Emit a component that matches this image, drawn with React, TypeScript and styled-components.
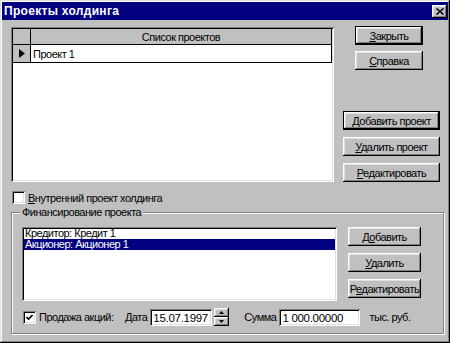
import React from 'react';
import styled, { createGlobalStyle, css } from 'styled-components';

const Global = createGlobalStyle`
  html, body { margin: 0; padding: 0; background: #c0c0c0; }
  body { font-family: "Liberation Sans", Arial, sans-serif; font-size: 11px; letter-spacing: -0.5px; color: #000; }
  * { box-sizing: border-box; }
`;

const raised = css`
  box-shadow: inset -1px -1px #000, inset 1px 1px #fff, inset -2px -2px #808080, inset 2px 2px #dfdfdf;
`;
const sunken = css`
  box-shadow: inset 1px 1px #808080, inset -1px -1px #fff, inset 2px 2px #000, inset -2px -2px #dfdfdf;
`;

const Window = styled.div`
  width: 450px;
  height: 343px;
  background: #c0c0c0;
  padding: 2px;
  box-shadow: inset -1px -1px #000, inset 1px 1px #dfdfdf, inset -2px -2px #808080, inset 2px 2px #fff;
  display: flex;
  flex-direction: column;
`;

const TitleBar = styled.div`
  height: 18px;
  background: #000080;
  color: #fff;
  display: flex;
  align-items: center;
  justify-content: space-between;
  padding: 0 1px 0 2px;
  font-weight: bold;
  font-size: 12px;
  letter-spacing: 0.3px;
`;

const CloseBtn = styled.div`
  width: 15px;
  height: 13px;
  background: #c0c0c0;
  ${raised};
  display: flex;
  align-items: center;
  justify-content: center;
`;

const Body = styled.div`
  padding: 6px 0 0 9px;
  display: flex;
  flex-direction: column;
`;

const TopRow = styled.div`
  display: flex;
  height: 156px;
`;

const Grid = styled.div`
  width: 323px;
  height: 155px;
  margin-top: 1px;
  background: #fff;
  padding: 2px;
  ${sunken};
  display: flex;
  flex-direction: column;
`;

const GridHeader = styled.div`
  display: flex;
  height: 16px;
  background: #c0c0c0;
  border-bottom: 1px solid #000;
`;

const GridRow = styled.div`
  display: flex;
  height: 18px;
  border-bottom: 1px solid #000;
`;

const IndCell = styled.div`
  width: 18px;
  flex: none;
  border-right: 1px solid #000;
  background: #c0c0c0;
  display: flex;
  align-items: center;
  justify-content: center;
`;

const Cell = styled.div<{ $center?: boolean }>`
  flex: 1;
  display: flex;
  align-items: center;
  justify-content: ${(p) => (p.$center ? 'center' : 'flex-start')};
  padding-left: ${(p) => (p.$center ? '0' : '2px')};
  border-right: 1px solid #000;
  white-space: nowrap;
`;

const SideCol = styled.div`
  margin-left: 9px;
  width: 97px;
  display: flex;
  flex-direction: column;
`;

const BtnGroup = styled.div<{ $bottom?: boolean; $gap: number }>`
  display: flex;
  flex-direction: column;
  gap: ${(p) => p.$gap}px;
  margin-top: ${(p) => (p.$bottom ? 'auto' : '0')};
`;

const Btn = styled.div<{ $w: number; $ml?: number; $default?: boolean }>`
  width: ${(p) => p.$w}px;
  height: 19px;
  margin-left: ${(p) => p.$ml ?? 0}px;
  background: #c0c0c0;
  display: flex;
  align-items: center;
  justify-content: center;
  white-space: nowrap;
  ${(p) =>
    p.$default
      ? css`
          box-shadow: inset 0 0 0 1px #000, inset -2px -2px #000, inset 2px 2px #fff, inset -3px -3px #808080,
            inset 3px 3px #dfdfdf;
        `
      : raised};
`;

const U = styled.span`
  text-decoration: underline;
`;

const CheckRow = styled.div`
  margin-top: 9px;
  height: 13px;
  display: flex;
  align-items: center;
  padding-left: 1px;
`;

const Check = styled.div`
  width: 13px;
  height: 13px;
  flex: none;
  background: #fff;
  ${sunken};
  display: flex;
  align-items: center;
  justify-content: center;
`;

const CheckLabel = styled.span<{ $ml: number }>`
  margin-left: ${(p) => p.$ml}px;
  white-space: nowrap;
`;

const GroupBox = styled.div`
  position: relative;
  margin-top: 8px;
  width: 433px;
  height: 122px;
  border: 1px solid #808080;
  box-shadow: inset 1px 1px #fff, 1px 1px #fff;
  padding: 14px 0 0 10px;
`;

const GroupLabel = styled.span`
  position: absolute;
  top: -7px;
  left: 8px;
  padding: 0 2px;
  background: #c0c0c0;
  line-height: 13px;
  white-space: nowrap;
`;

const GroupRow = styled.div`
  display: flex;
`;

const ListBox = styled.div`
  width: 315px;
  height: 74px;
  background: #fff;
  padding: 1px 2px 2px 2px;
  ${sunken};
`;

const ListItem = styled.div<{ $sel?: boolean }>`
  height: 11px;
  line-height: 11px;
  padding-left: 1px;
  white-space: nowrap;
  background: ${(p) => (p.$sel ? '#000080' : 'transparent')};
  color: ${(p) => (p.$sel ? '#fff' : '#000')};
`;

const GroupBtns = styled.div`
  margin-left: 11px;
  display: flex;
  flex-direction: column;
  gap: 7px;
`;

const BottomRow = styled.div`
  margin-top: 7px;
  height: 18px;
  display: flex;
  align-items: center;
  padding-left: 1px;
`;

const Label = styled.span<{ $ml: number; $w?: number }>`
  margin-left: ${(p) => p.$ml}px;
  width: ${(p) => (p.$w ? `${p.$w}px` : 'auto')};
  white-space: nowrap;
`;

const Field = styled.div<{ $w: number; $ml: number }>`
  width: ${(p) => p.$w}px;
  height: 17px;
  margin-left: ${(p) => p.$ml}px;
  background: #fff;
  ${sunken};
  display: flex;
  align-items: center;
  padding: 1px 0 0 3px;
  white-space: nowrap;
  font-size: 11.5px;
  letter-spacing: -0.3px;
`;

const Spinner = styled.div`
  width: 15px;
  height: 18px;
  margin-left: 2px;
  display: flex;
  flex-direction: column;
`;

const SpinPart = styled.div`
  flex: 1;
  background: #c0c0c0;
  ${raised};
  display: flex;
  align-items: center;
  justify-content: center;
`;

const Tri = ({ up }: { up?: boolean }) => (
  <svg width="5" height="3" viewBox="0 0 5 3">
    <polygon points={up ? '2.5,0 5,3 0,3' : '0,0 5,0 2.5,3'} fill="#000" />
  </svg>
);

const CheckMark = () => (
  <svg width="7" height="7" viewBox="0 0 7 7">
    <path d="M0.5 3 L2.5 5 L6.5 1" stroke="#000" strokeWidth="1.6" fill="none" />
  </svg>
);

export default function App() {
  return (
    <>
      <Global />
      <Window>
        <TitleBar>
          <span>Проекты холдинга</span>
          <CloseBtn>
            <svg width="8" height="7" viewBox="0 0 8 7">
              <path d="M0.5 0.5 L7.5 6.5 M7.5 0.5 L0.5 6.5" stroke="#000" strokeWidth="1.5" />
            </svg>
          </CloseBtn>
        </TitleBar>
        <Body>
          <TopRow>
            <Grid>
              <GridHeader>
                <IndCell />
                <Cell $center>Список проектов</Cell>
              </GridHeader>
              <GridRow>
                <IndCell>
                  <svg width="6" height="9" viewBox="0 0 6 9">
                    <polygon points="0,0 6,4.5 0,9" fill="#000" />
                  </svg>
                </IndCell>
                <Cell>Проект 1</Cell>
              </GridRow>
            </Grid>
            <SideCol>
              <BtnGroup $gap={6}>
                <Btn $w={68} $ml={12} $default>
                  <span><U>З</U>акрыть</span>
                </Btn>
                <Btn $w={68} $ml={12}>
                  <span><U>С</U>правка</span>
                </Btn>
              </BtnGroup>
              <BtnGroup $gap={7} $bottom>
                <Btn $w={97} $default>
                  <span><U>Д</U>обавить проект</span>
                </Btn>
                <Btn $w={97}>
                  <span><U>У</U>далить проект</span>
                </Btn>
                <Btn $w={97}>
                  <span><U>Р</U>едактировать</span>
                </Btn>
              </BtnGroup>
            </SideCol>
          </TopRow>
          <CheckRow>
            <Check />
            <CheckLabel $ml={3}>
              <U>В</U>нутренний проект холдинга
            </CheckLabel>
          </CheckRow>
          <GroupBox>
            <GroupLabel>Финансирование проекта</GroupLabel>
            <GroupRow>
              <ListBox>
                <ListItem>Кредитор: Кредит 1</ListItem>
                <ListItem $sel>Акционер: Акционер 1</ListItem>
              </ListBox>
              <GroupBtns>
                <Btn $w={73}>
                  <span>Д<U>о</U>бавить</span>
                </Btn>
                <Btn $w={73}>
                  <span><U>У</U>далить</span>
                </Btn>
                <Btn $w={73}>
                  <span>Р<U>е</U>дактировать</span>
                </Btn>
              </GroupBtns>
            </GroupRow>
            <BottomRow>
              <Check>
                <CheckMark />
              </Check>
              <Label $ml={3} $w={86}>Продажа акций:</Label>
              <Label $ml={0}>Дата</Label>
              <Field $w={62} $ml={3}>15.07.1997</Field>
              <Spinner>
                <SpinPart><Tri up /></SpinPart>
                <SpinPart><Tri /></SpinPart>
              </Spinner>
              <Label $ml={15}>Сумма</Label>
              <Field $w={81} $ml={3}>1 000.00000</Field>
              <Label $ml={9}>тыс. руб.</Label>
            </BottomRow>
          </GroupBox>
        </Body>
      </Window>
    </>
  );
}
